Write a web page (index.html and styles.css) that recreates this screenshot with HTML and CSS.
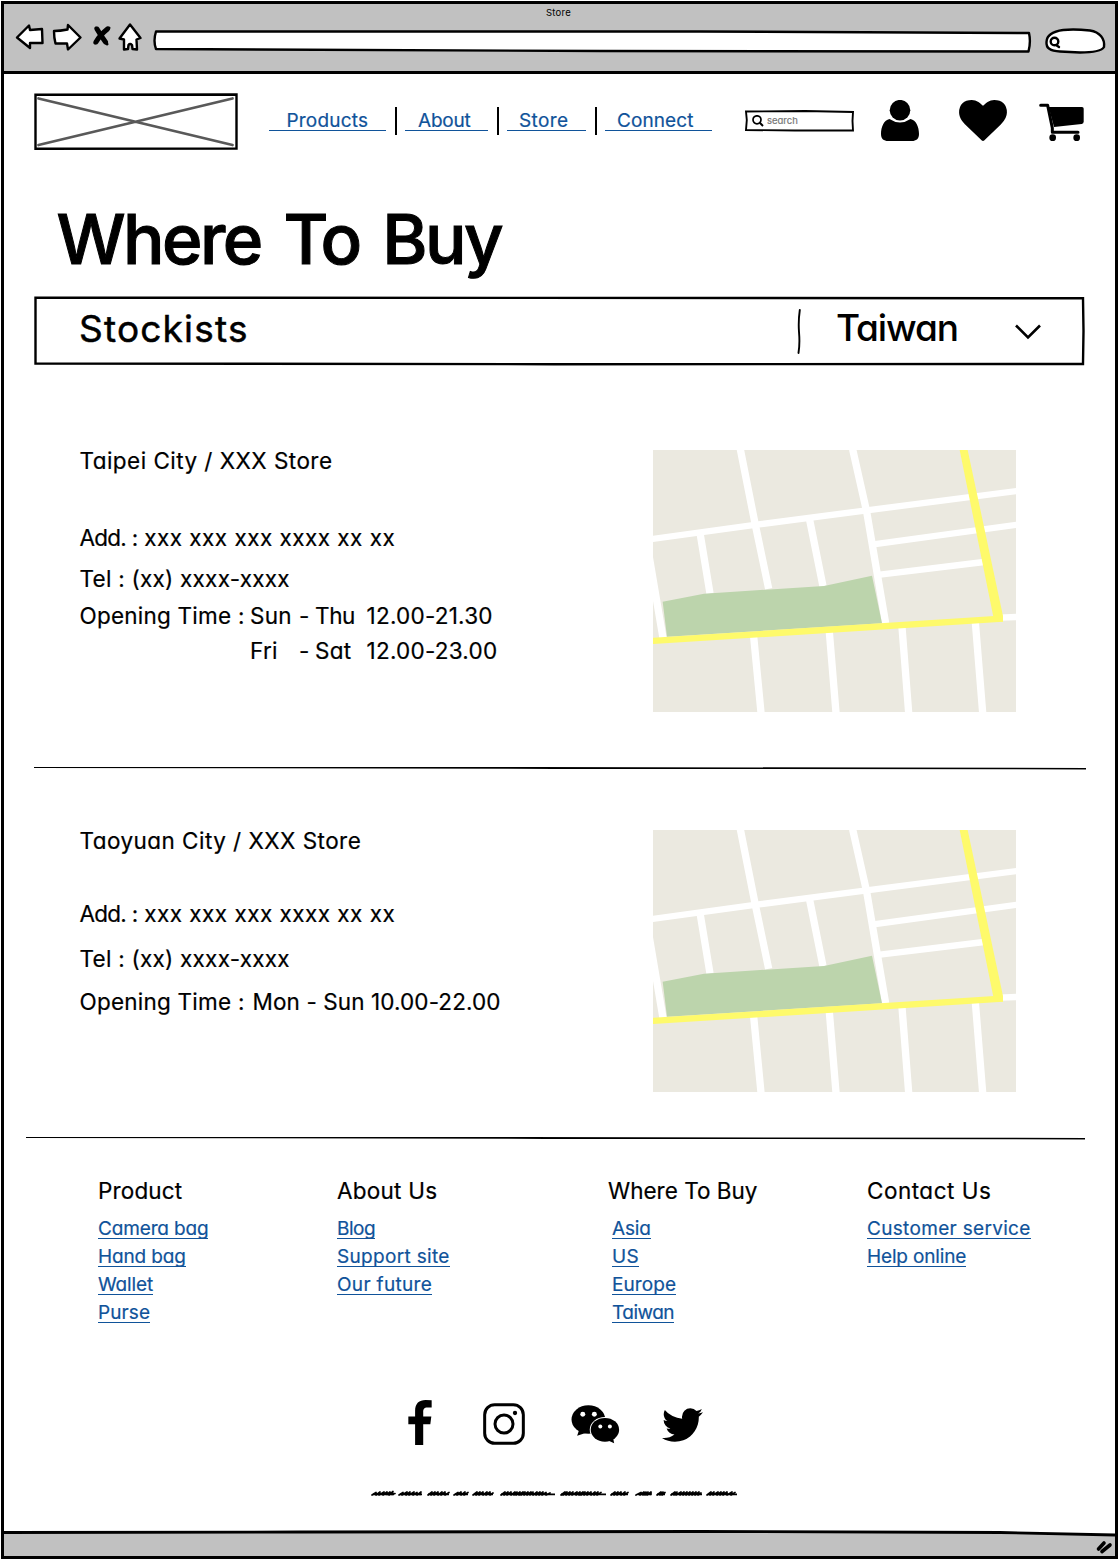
FILE: index.html
```html
<!DOCTYPE html>
<html lang="en">
<head>
<meta charset="utf-8">
<title>Store</title>
<link rel="stylesheet" href="styles.css">
</head>
<body>
<svg class="defs" width="0" height="0" aria-hidden="true">
  <symbol id="street-map" viewBox="39 30 1089 786">
    <rect x="39" y="30" width="1089" height="786" fill="#ebe9e0"/>
    <g fill="none" stroke="#fff" stroke-width="22">
      <path stroke-width="19" d="M30 298L350 254L680 211L1140 152M700 313L1140 253M720 404L1032 366M1080 533L1130 531"/>
      <path d="M301 28L345 250L386 446M638 28L680 215L737 550M181 285L210 460M509 240L549 439M26 340L69 594"/>
      <path d="M341 590L363 818M568 576L588 818M786 562L806 818M1006 546L1028 818"/>
    </g>
    <path fill="#bcd4ac" d="M68 485L192 461L552 438L696 407L726 550L81 590Z"/>
    <path fill="none" stroke="#fefa6b" stroke-width="19" d="M36 603L1088 536"/>
    <path fill="#fefa6b" d="M959 30H983L1089 528V545L1062 540Z"/>
  </symbol>
</svg>
<div class="window">
  <div class="chrome">
    <div class="chrome-title">Store</div>
    <div class="toolbar">
      <svg class="tool back" viewBox="14 22 30 32"><path d="M17 37.500L29 25.500L30 30L42 29L42.500 43L30 43L30 48Z"/></svg>
      <svg class="tool forward" viewBox="52 22 31 32"><path d="M54 31Q60 31 67.500 29.500L68 25L80.500 37.500L68 49.500L67 43.500Q61 43.500 55.500 43.500Q54 38 54 31Z"/></svg>
      <svg class="tool stop" viewBox="92 22 20 32"><path d="M97 29Q101 36 105.500 42M107.500 29Q100 35 96 42"/><path stroke-width="3" d="M96 28Q101 35 107 44M109 28Q100 35 95 43"/></svg>
      <svg class="tool home" viewBox="117 22 26 32"><path d="M130 24.500L140.500 38L136.500 39.500L137 49.500L132.500 49L132 45Q130 43 128.500 45L128 49L124 49.500L124 39.500L119.500 38.500Z"/></svg>
      <svg class="tool address" viewBox="152 22 880 32"><path d="M156 31.500L700 31.500L1029 33Q1031 42 1028.500 51.500L600 51L156 49Q153 41 156 31.500Z"/></svg>
      <svg class="tool find" viewBox="1043 22 65 32"><path d="M1046.500 42C1047 27 1076 29 1090 30.500C1100 32 1105 39 1104 47C1101 52 1090 52.500 1080 52.500L1060 51.500C1050 51 1046 48 1046.500 42Z"/><circle cx="1054.500" cy="41.500" r="3.800"/><path d="M1056 45L1059 47"/></svg>
    </div>
  </div>

  <div class="page">
    <header class="header">
      <svg class="logo" viewBox="0 0 204 57"><path d="M4.500 5.500L198.500 52M4.500 52L198.500 5.500" stroke="#595959" stroke-width="2.800" stroke-linecap="round"/><path d="M1.500 1.800L202.500 1.500V55.500L1.500 55.800Z" fill="none" stroke="#000" stroke-width="2.400"/></svg>
      <nav class="nav">
        <a class="nav-link products">Products</a><i class="nav-rule"></i>
        <a class="nav-link about">About</a><i class="nav-rule"></i>
        <a class="nav-link store-link">Store</a><i class="nav-rule"></i>
        <a class="nav-link connect">Connect</a>
      </nav>
      <div class="search">
        <svg class="frame" viewBox="0 0 109 22"><path d="M1 1.500L60 1L108 2L107.500 11L108 20.500L50 20.500L1 20L1.800 10Z" fill="none" stroke="#000" stroke-width="1.900"/></svg>
        <svg class="search-icon" viewBox="0 0 12 12"><circle cx="5" cy="4.800" r="4" fill="none" stroke="#000" stroke-width="1.700"/><path d="M7.800 7.800L11 11" stroke="#000" stroke-width="2"/></svg>
        <span class="search-text">search</span>
      </div>
      <svg class="user-icon" viewBox="881 100 38 41"><circle cx="900" cy="110.200" r="10.300"/><path d="M889.500 119Q900 126 910.500 119C916 120 919 127 919 134C919 139 916 141 912 141H888C884 141 881 139 881 134C881 127 884 120 889.500 119Z"/></svg>
      <svg class="heart-icon" viewBox="0 128 1792 1536"><path d="M896 1664q-26 0-44-18l-624-602q-10-8-27.500-26t-55.500-65.500-68-97.500-53.500-121-23.500-138q0-220 127-344t351-124q62 0 126.500 21.500t120 58 95.500 68.500 76 68q36-36 76-68t95.500-68.500 120-58 126.500-21.500q224 0 351 124t127 344q0 221-229 450l-623 600q-18 18-44 18z"/></svg>
      <svg class="cart-icon" viewBox="957 309 135 117"><path d="M986 321H1086Q1091 321 1091 326V365Q1091 371 1085 372L1002 381Z"/><path d="M962 316H983L997 384V397H1074" fill="none" stroke="#000" stroke-width="9" stroke-linecap="round" stroke-linejoin="round"/><circle cx="998" cy="413" r="10"/><circle cx="1070" cy="413" r="10"/></svg>
    </header>

    <h1 class="title">Where To Buy</h1>

    <div class="region-bar">
      <svg class="frame" viewBox="0 0 1051 70"><path d="M1.500 1.700L500 1.900L1049 2.300L1049.500 35L1049 68L520 68.200L1.500 67.500L1.500 35Z" fill="none" stroke="#000" stroke-width="2.400"/></svg>
      <h2 class="region-title">Stockists</h2>
      <svg class="region-rule" viewBox="0 0 4 46"><path d="M2.800 1Q1.200 12 2 23Q3 35 1.500 44" fill="none" stroke="#000" stroke-width="1.900" stroke-linecap="round"/></svg>
      <span class="region-name">Taiwan</span>
      <svg class="chevron" viewBox="0 0 28 18"><path d="M2 2.500L14 14.500L26 2.500" fill="none" stroke="#000" stroke-width="2.600"/></svg>
    </div>

    <section class="store first">
      <div class="details">
        <h3 class="line name">Taipei City / XXX Store</h3>
        <p class="line address-line"><span class="label">Add. :</span> xxx xxx xxx xxxx xx xx</p>
        <p class="line phone">Tel : (xx) xxxx-xxxx</p>
        <div class="hours">
          <span class="line">Opening Time :</span>
          <div class="slots">
            <span class="line">Sun</span><span class="line">-</span><span class="line thu">Thu</span><span class="line">12.00-21.30</span>
            <span class="line fri">Fri</span><span class="line">-</span><span class="line">Sat</span><span class="line">12.00-23.00</span>
          </div>
        </div>
      </div>
      <svg class="map"><use href="#street-map"/></svg>
    </section>

    <svg class="divider" viewBox="0 0 1052 4"><path d="M0 1L500 1L1052 1.900V3.400L520 2.900L0 1.900Z"/></svg>

    <section class="store second">
      <div class="details">
        <h3 class="line name">Taoyuan City / XXX Store</h3>
        <p class="line address-line"><span class="label">Add. :</span> xxx xxx xxx xxxx xx xx</p>
        <p class="line phone">Tel : (xx) xxxx-xxxx</p>
        <div class="hours">
          <span class="line">Opening Time :</span>
          <span class="line daily">Mon - Sun 10.00-22.00</span>
        </div>
      </div>
      <svg class="map"><use href="#street-map"/></svg>
    </section>

    <svg class="divider wide" viewBox="0 0 1059 4"><path d="M0 1L500 1L1059 1.900V3.400L520 2.900L0 1.900Z"/></svg>

    <footer class="footer">
      <div class="links-column">
        <h4 class="links-title">Product</h4>
        <a class="link tight">Camera bag</a><a class="link tight">Hand bag</a><a class="link tight">Wallet</a><a class="link">Purse</a>
      </div>
      <div class="links-column">
        <h4 class="links-title about-title">About Us</h4>
        <a class="link tighter">Blog</a><a class="link loose">Support site</a><a class="link loose">Our future</a>
      </div>
      <div class="links-column">
        <h4 class="links-title where-title">Where To Buy</h4>
        <div class="indent"><a class="link tight">Asia</a><a class="link loose">US</a><a class="link">Europe</a><a class="link tighter">Taiwan</a></div>
      </div>
      <div class="links-column">
        <h4 class="links-title contact-title">Contact Us</h4>
        <a class="link loose">Customer service</a><a class="link tight">Help online</a>
      </div>
    </footer>

    <div class="social">
      <svg class="facebook" viewBox="143 60 71 133"><path d="M213 61V82H201C190 82 188 88 188 95V109H212L209 132H188V193H164V132H144V109H164V92C164 70 176 60 195 60Z"/></svg>
      <svg class="instagram" viewBox="369 68 126 126"><rect x="374" y="73" width="116" height="116" rx="30" fill="none" stroke="#000" stroke-width="9"/><circle cx="432" cy="131" r="27" fill="none" stroke="#000" stroke-width="9"/><circle cx="465" cy="98" r="6.500"/></svg>
      <svg class="wechat" viewBox="632 75 147 118"><path d="M656 150L650 168L680 158Z"/><ellipse cx="684" cy="119" rx="51" ry="43"/><circle cx="667" cy="103" r="7.500" fill="#fff"/><circle cx="702" cy="103" r="7.500" fill="#fff"/><ellipse cx="734" cy="150" rx="46" ry="39" fill="#fff"/><ellipse cx="734" cy="150" rx="43" ry="36"/><path d="M742 182L762 191L758 172Z"/><circle cx="720" cy="140" r="6" fill="#fff"/><circle cx="749" cy="140" r="6" fill="#fff"/></svg>
      <svg class="twitter" viewBox="108 256 1576 1280"><path d="M1684 408q-67 98-162 167 1 14 1 42 0 130-38 259.500t-115.500 248.500-184.500 210.500-258 146-323 54.500q-271 0-496-145 35 4 78 4 225 0 401-138-105-2-188-64.500t-114-159.500q33 5 61 5 43 0 85-11-112-23-185.500-111.500t-73.500-205.500v-4q68 38 146 41-66-44-105-115t-39-154q0-88 44-163 121 149 294.500 238.500t371.500 99.500q-8-38-8-74 0-134 94.500-228.500t228.500-94.500q140 0 236 102 109-21 205-78-37 115-142 178 93-10 186-50z"/></svg>
    </div>

    <svg class="scribble" viewBox="370 1489 370 10">
      <g fill="none" stroke="#000" stroke-width="1.700" stroke-linejoin="round" stroke-linecap="round">
        <path d="M372 1495l4-2.500l0 2.500l4-3l-1 3l5-3l-1 3l4-3l0 2.500l3-2.500l-1 3l4-3.500l-1 3l3-1"/>
        <path d="M399 1495l4-2.500l-1 2.500l5-3l-1 3l4-3l-1 3l5-3l-1 3l4-2.500l0 2.500l4-3l-1 2.500"/>
        <path d="M428 1495l4-3l-1 3l4-3l-1 3l4-3l0 3l4-3l-1 3l4-3l0 3l4-2.500"/>
        <path d="M454 1495l4-2.500l-1 2.500l4-3l0 3l4-3l-1 3l4-2.500"/>
        <path d="M473 1495l4-3l-1 3l4-3l-1 3l4-3l0 3l4-3l-1 3l4-3l0 3l3-2"/>
        <path d="M501 1495l4-3l-1 3l4-3l-1 3l4-3l0 3l4-3l-1 3l3-3l-1 3l4-3l-1 3l4-3l-2 3l4-3l-1 3l4-3l-1 3l4-3l-1 3l3-3l0 3l4-3l-1 3l4-3l-1 3l4-3l-1 3l4-2.500l0 2.500l4-2"/>
        <path d="M561 1495l4-3l-2 3l4-3l-1 3l4-3l-1 3l4-3l-1 3l5-3l-1 3l4-3l-1 3l4-3l-2 3l4-3l-1 3l4-3l-1 3l4-3l0 3l4-3l-1 3l4-3l-1 3l4-2.500"/>
        <path d="M611 1495l4-3l-1 3l4-3l-1 3l4-3l0 3l4-3l-1 3l4-2.500"/>
        <path d="M636 1495l5-2.500l-1 2.500l4-3l-1 3l3-3l-1 3l3-3l-1 3l4-3l0 2.500"/>
        <path d="M657 1495l4-3l-1 3l3-3l-1 3l3-2.500"/>
        <path d="M671 1495l4-3l-1 3l3-3l-1 3l5-3l-1 3l4-3l-1 3l4-3l-1 3l4-3l-1 3l4-3l-1 3l4-3l-1 3l4-3l-1 3l3-2"/>
        <path d="M707 1495l4-3l-1 3l4-3l-1 3l5-3l-1 3l4-3l-1 3l4-3l-1 3l4-3l0 3l5-3l-1 3l4-2.500"/>
      </g>
      <path d="M373 1494.300h21M400 1494.300h22M428 1494.300h21M455 1494.300h13M474 1494.300h19M501 1494.300h54M561 1494.300h45M611 1494.300h17M638 1494.300h13M657 1494.300h8M671 1494.300h31M708 1494.300h29" stroke="#000" stroke-width="1.800"/>
    </svg>
  </div>

  <svg class="status" viewBox="4 1529 1111 27"><path fill="#c1c1c1" d="M4 1533L1000 1532L1115 1535V1556H4Z"/><path d="M4 1532.500L300 1532L700 1531.500L1000 1532.500L1115 1535" fill="none" stroke="#000" stroke-width="2.800"/><path d="M1098.500 1549L1104 1543M1102 1551.500L1110 1545" stroke="#000" stroke-width="3.600" stroke-linecap="round"/></svg>
</div>
</body>
</html>
```

FILE: styles.css
```css
* { box-sizing: border-box; }

body {
  margin: 0;
  background: #fff;
  color: #000;
  font-family: Inter, "Noto Sans", sans-serif;
  font-feature-settings: "cv11";
}

h1, h2, h3, h4, p { margin: 0; font-weight: 400; }
svg { display: block; flex: none; }
.defs { position: absolute; }

.window {
  display: flex;
  flex-direction: column;
  width: 1117px;
  height: 1558px;
  margin: 1px 0 0 1px;
  border: 3px solid #000;
}

/* browser bar */
.chrome {
  height: 70px;
  padding-top: 3px;
  background: #c1c1c1;
  border-bottom: 3px solid #000;
}
.chrome-title {
  height: 15px;
  padding-right: 2px;
  font-size: 9.5px;
  line-height: 12px;
  letter-spacing: .25px;
  text-align: center;
}
.toolbar { display: flex; padding-left: 10px; }
.tool {
  height: 32px;
  fill: #fff;
  stroke: #000;
  stroke-width: 2.4px;
  stroke-linejoin: round;
  stroke-linecap: round;
}
.back { width: 30px; }
.forward { width: 31px; margin-left: 8px; }
.stop { width: 20px; margin-left: 9px; fill: none; stroke-width: 5px; }
.home { width: 26px; margin-left: 5px; }
.address { width: 880px; margin-left: 9px; }
.find { width: 65px; margin-left: 11px; }

.page { flex: 1; }

/* header */
.header { display: flex; align-items: flex-start; height: 132px; padding: 19px 0 0 30px; }
.logo { width: 204px; height: 57px; }
.nav { display: flex; margin: 14px 33px 0 31px; }
.nav-link {
  height: 24px;
  border-bottom: 1px solid #10539a;
  color: #10539a;
  font-size: 19px;
  line-height: 27px;
  -webkit-text-stroke: .2px #10539a;
}
.products { width: 117px; padding-left: 17.5px; letter-spacing: .2px; }
.about { width: 83px; padding-left: 13px; letter-spacing: -.2px; }
.store-link { width: 79px; padding-left: 12px; letter-spacing: .4px; }
.connect { width: 107px; padding-left: 12px; letter-spacing: .1px; }
.nav-rule { width: 2px; height: 28px; margin: 0 8px 0 9px; background: #000; }

.search {
  position: relative;
  display: flex;
  width: 109px;
  height: 22px;
  margin-top: 17px;
  padding: 5px 0 0 7px;
}
.frame { position: absolute; inset: 0; width: 100%; height: 100%; }
.search-icon { width: 12px; height: 12px; margin-right: 3px; }
.search-text { color: #777; font-size: 9.5px; line-height: 12px; -webkit-text-stroke: .2px #777; }

.user-icon { width: 38px; height: 41px; margin: 7px 0 0 27px; }
.heart-icon { width: 48px; height: 41px; margin: 7px 0 0 40px; }
.cart-icon { width: 45px; height: 39px; margin: 10px 0 0 32px; }

.title {
  height: 90px;
  padding-left: 52.5px;
  font-size: 69px;
  font-weight: 500;
  line-height: 67px;
  letter-spacing: -2.6px;
  word-spacing: 7px;
  -webkit-text-stroke: 1px #000;
}

/* region bar */
.region-bar {
  position: relative;
  display: flex;
  align-items: flex-start;
  width: 1051px;
  height: 70px;
  margin-left: 30px;
  font-size: 37px;
  line-height: 46px;
}
.region-title { width: 717px; margin: 10px 0 0 45px; font-size: 37px; letter-spacing: 1.2px; -webkit-text-stroke: .5px #000; }
.region-rule { width: 4px; height: 46px; margin: 13px 35px 0 1px; }
.region-name { width: 176px; margin-top: 9px; font-weight: 500; letter-spacing: -1.15px; }
.chevron { width: 28px; height: 18px; margin-top: 27px; margin-left: 2px; }

/* stores */
.store { display: flex; justify-content: space-between; width: 1012px; padding-left: 75.5px; }
.store.first { height: 400px; padding-top: 80px; }
.store.second { height: 366px; padding-top: 56px; }
.map { width: 363px; height: 262px; margin-top: 4px; }
.line {
  display: block;
  font-size: 22.5px;
  line-height: 30px;
  letter-spacing: .23px;
  white-space: nowrap;
  -webkit-text-stroke: .2px #000;
}
.name { margin-bottom: 47px; letter-spacing: .46px; }
.address-line { margin-bottom: 11px; letter-spacing: .48px; }
.label { letter-spacing: -.75px; }
.phone { margin-bottom: 7px; letter-spacing: .25px; }
.second .name { margin-bottom: 43px; }
.second .address-line { margin-bottom: 15px; }
.second .phone { margin-bottom: 13px; }
.hours { display: flex; }
.slots {
  display: grid;
  grid-template-columns: 49px 16px 51.5px auto;
  row-gap: 5px;
  margin-left: 5.5px;
}
.thu { letter-spacing: -.4px; }
.daily { margin-left: 8px; letter-spacing: .1px; }

.divider { width: 1052px; height: 4px; margin-left: 30px; }
.divider.wide { width: 1059px; margin-left: 22px; }

/* footer */
.footer {
  display: grid;
  grid-template-columns: 239px 271px 259px auto;
  height: 260px;
  padding: 36px 0 0 94px;
}
.links-title { height: 39px; font-size: 22.5px; line-height: 30px; letter-spacing: .15px; -webkit-text-stroke: .2px #000; }
.about-title { letter-spacing: .25px; }
.where-title { letter-spacing: 0; }
.contact-title { letter-spacing: .5px; }
.link {
  display: block;
  width: fit-content;
  height: 24px;
  margin-bottom: 4px;
  border-bottom: 1px solid #10539a;
  color: #10539a;
  font-size: 19px;
  line-height: 27px;
  letter-spacing: .1px;
  -webkit-text-stroke: .2px #10539a;
}
.tight { letter-spacing: -.15px; }
.tighter { letter-spacing: -.5px; }
.loose { letter-spacing: .32px; }
.indent { padding-left: 4px; }

.social { display: flex; align-items: flex-start; height: 89px; padding-left: 404px; }
.facebook { width: 24px; height: 45px; }
.instagram { width: 42px; height: 42px; margin: 3px 0 0 51px; }
.wechat { width: 49px; height: 39px; margin: 5px 0 0 46px; }
.twitter { width: 41px; height: 34px; margin: 8px 0 0 42px; }

.scribble { width: 370px; height: 10px; margin-left: 366px; }

.status { width: 1111px; height: 27px; }
```
